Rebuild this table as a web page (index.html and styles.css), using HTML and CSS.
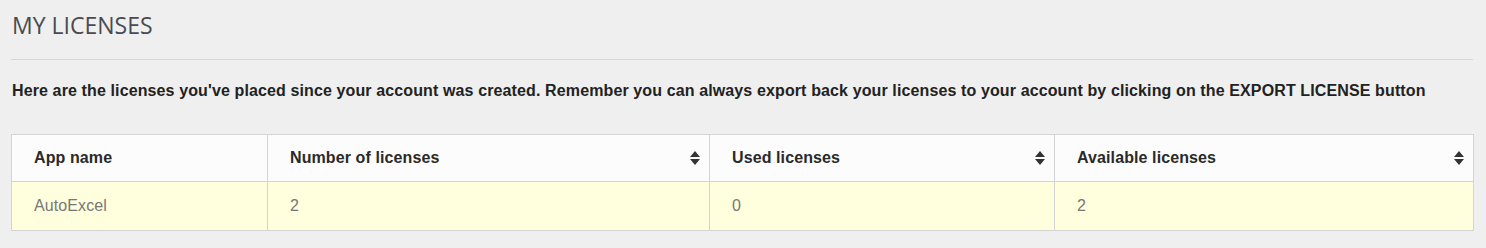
FILE: index.html
```html
<!DOCTYPE html>
<html>
<head>
<meta charset="utf-8">
<link rel="stylesheet" href="styles.css">
</head>
<body>
<div class="page">
  <h1 class="title">MY LICENSES</h1>
  <hr class="rule">
  <p class="intro">Here are the licenses you've placed since your account was created. Remember you can always export back your licenses to your account by clicking on the EXPORT LICENSE button</p>
  <table class="licenses">
    <colgroup>
      <col class="c1"><col class="c2"><col class="c3"><col class="c4">
    </colgroup>
    <thead>
      <tr>
        <th>App name</th>
        <th class="sortable"><span>Number of licenses</span><svg class="sort" viewBox="0 0 10 14"><path d="M0 6h10L5 0z M0 8h10l-5 6z"/></svg></th>
        <th class="sortable"><span>Used licenses</span><svg class="sort" viewBox="0 0 10 14"><path d="M0 6h10L5 0z M0 8h10l-5 6z"/></svg></th>
        <th class="sortable"><span>Available licenses</span><svg class="sort" viewBox="0 0 10 14"><path d="M0 6h10L5 0z M0 8h10l-5 6z"/></svg></th>
      </tr>
    </thead>
    <tbody>
      <tr>
        <td>AutoExcel</td>
        <td>2</td>
        <td>0</td>
        <td>2</td>
      </tr>
    </tbody>
  </table>
</div>
</body>
</html>
```
FILE: styles.css
```css
html, body {
  margin: 0;
  padding: 0;
  background: #efefef;
}
.page {
  padding: 11px 13px 0 11px;
}
.title {
  margin: 0;
  padding-left: 1px;
  font-family: "Open Sans", sans-serif;
  font-weight: 400;
  font-size: 23px;
  line-height: 28px;
  color: #4a4a50;
}
.rule {
  margin: 20px 0 0 0;
  border: 0;
  border-top: 1px solid #d6d6d6;
  height: 0;
}
.intro {
  margin: 21px 0 0 1px;
  font-family: "Liberation Sans", Arial, sans-serif;
  font-weight: 700;
  font-size: 16px;
  line-height: 20px;
  letter-spacing: 0.12px;
  color: #222;
}
.licenses {
  margin-top: 33px;
  width: 1462px;
  border-collapse: collapse;
  table-layout: fixed;
  font-family: "Liberation Sans", Arial, sans-serif;
  font-size: 16px;
  letter-spacing: 0.1px;
}
.c1 { width: 256px; }
.c2 { width: 442px; }
.c3 { width: 345px; }
.c4 { width: 419px; }
.licenses th, .licenses td {
  border: 1px solid #d4d4d4;
  padding: 0 21px 0 22px;
  text-align: left;
}
.licenses th {
  height: 46px;
  background: #fcfcfc;
  font-weight: 700;
  color: #2a2a2a;
}
.sortable {
  position: relative;
}
.sort {
  position: absolute;
  right: 9px;
  top: 16px;
  width: 10px;
  height: 14px;
  fill: #333;
}
.licenses td {
  height: 48px;
  background: #ffffdd;
  color: #777;
}
```
